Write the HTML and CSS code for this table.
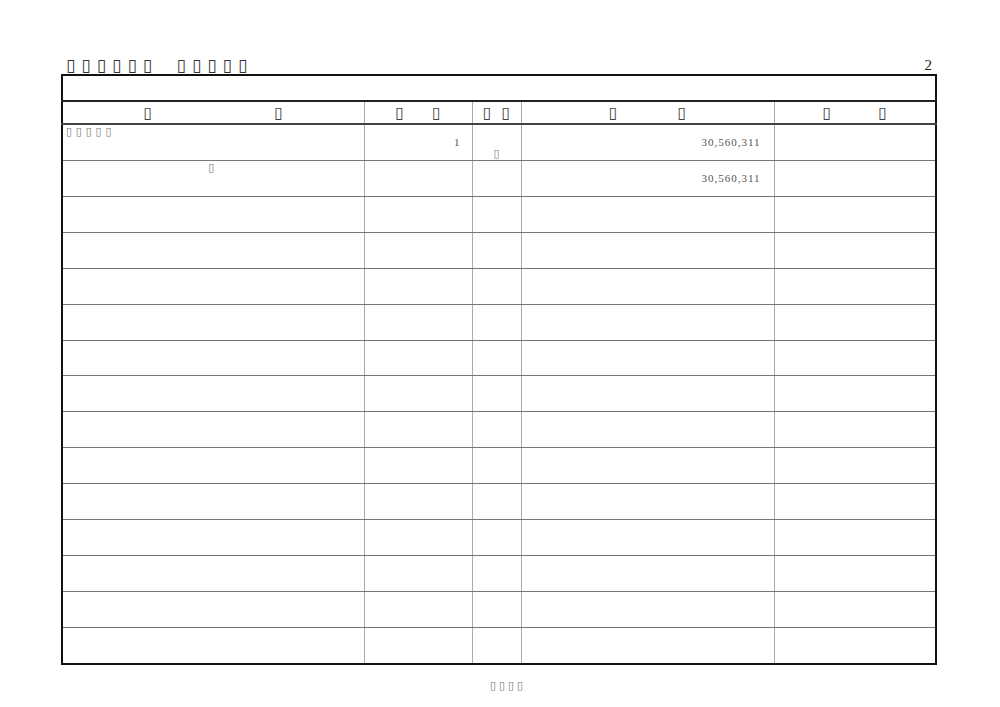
FILE: index.html
```html
<!DOCTYPE html>
<html lang="ja">
<head>
<meta charset="utf-8">
<link rel="stylesheet" href="styles.css">
</head>
<body>
<div class="page">
  <div class="title-row">
    <h1 class="title">▯▯▯▯▯▯ ▯▯▯▯▯</h1>
    <span class="pageno">2</span>
  </div>
  <table class="sheet">
    <colgroup>
      <col class="c-name"><col class="c-qty"><col class="c-unit"><col class="c-amt"><col class="c-rem">
    </colgroup>
    <tr class="blank"><td colspan="5"></td></tr>
    <tr class="head">
      <th><span class="hd hd-name"><span>▯</span><span>▯</span></span></th>
      <th><span class="hd hd-qty"><span>▯</span><span>▯</span></span></th>
      <th><span class="hd hd-unit"><span>▯</span><span>▯</span></span></th>
      <th><span class="hd hd-amt"><span>▯</span><span>▯</span></span></th>
      <th><span class="hd hd-rem"><span>▯</span><span>▯</span></span></th>
    </tr>
    <tr class="row">
      <td class="name">▯▯▯▯▯</td>
      <td class="qty">1</td>
      <td class="unit">▯</td>
      <td class="amt">30,560,311</td>
      <td></td>
    </tr>
    <tr class="row">
      <td class="name total">▯</td>
      <td class="qty"></td>
      <td class="unit"></td>
      <td class="amt">30,560,311</td>
      <td></td>
    </tr>
    <tr class="row"><td></td><td></td><td></td><td></td><td></td></tr>
    <tr class="row"><td></td><td></td><td></td><td></td><td></td></tr>
    <tr class="row"><td></td><td></td><td></td><td></td><td></td></tr>
    <tr class="row"><td></td><td></td><td></td><td></td><td></td></tr>
    <tr class="row"><td></td><td></td><td></td><td></td><td></td></tr>
    <tr class="row"><td></td><td></td><td></td><td></td><td></td></tr>
    <tr class="row"><td></td><td></td><td></td><td></td><td></td></tr>
    <tr class="row"><td></td><td></td><td></td><td></td><td></td></tr>
    <tr class="row"><td></td><td></td><td></td><td></td><td></td></tr>
    <tr class="row"><td></td><td></td><td></td><td></td><td></td></tr>
    <tr class="row"><td></td><td></td><td></td><td></td><td></td></tr>
    <tr class="row"><td></td><td></td><td></td><td></td><td></td></tr>
    <tr class="row"><td></td><td></td><td></td><td></td><td></td></tr>
  </table>
  <div class="footer">▯▯▯▯</div>
</div>
</body>
</html>
```
FILE: styles.css
```css
html, body {
  margin: 0;
  padding: 0;
  background: #fff;
}
body {
  font-family: "Liberation Serif", "DejaVu Serif", serif;
  color: #333;
}
.page {
  width: 874px;
  margin-left: 61px;
  padding-top: 56px;
}
.title-row {
  display: flex;
  justify-content: space-between;
  align-items: flex-end;
  height: 18px;
}
.title {
  margin: 0 0 0 5px;
  font-family: "DejaVu Sans", sans-serif;
  font-weight: normal;
  font-size: 17px;
  letter-spacing: 6px;
  word-spacing: 7px;
  line-height: 18px;
  color: #333;
  white-space: pre;
}
.pageno {
  font-family: "Liberation Serif", serif;
  font-size: 15px;
  line-height: 18px;
  margin-right: 3px;
  color: #222;
}
.sheet {
  width: 874px;
  border-collapse: collapse;
  table-layout: fixed;
  border: 2px solid #111;
}
.c-name { width: 302px; }
.c-qty { width: 108px; }
.c-unit { width: 49px; }
.c-amt { width: 253px; }
.c-rem { width: 162px; }
.sheet td, .sheet th {
  padding: 0;
  line-height: 12px;
  border-left: 1px solid #aaa;
  border-right: 1px solid #aaa;
  border-bottom: 1px solid #777;
}
.blank td {
  height: 24px;
  border-bottom: 2px solid #222;
}
.head th {
  height: 21px;
  font-weight: normal;
  border-bottom: 2px solid #444;
}
.hd {
  display: flex;
  justify-content: center;
  font-family: "DejaVu Sans", sans-serif;
  font-size: 16px;
  line-height: 18px;
  color: #444;
}
.hd-name { gap: 122px; }
.hd-qty { gap: 28px; }
.hd-unit { gap: 10px; }
.hd-amt { gap: 60px; }
.hd-rem { gap: 47px; }
.row td {
  height: 34.93px;
  font-size: 11px;
  color: #555;
}
.name {
  vertical-align: top;
  font-family: "DejaVu Sans", sans-serif;
  letter-spacing: 3.8px;
  line-height: 14px !important;
  padding-left: 3px !important;
  color: #777 !important;
}
.name.total {
  text-align: center;
  padding-left: 0 !important;
}
.qty {
  text-align: right;
  vertical-align: middle;
  padding-right: 12px !important;
}
.unit {
  text-align: center;
  vertical-align: bottom;
  font-family: "DejaVu Sans", sans-serif;
  line-height: 13px !important;
  color: #777 !important;
}
.amt {
  text-align: right;
  vertical-align: middle;
  letter-spacing: 1px;
  padding-right: 13px !important;
}
.footer {
  text-align: center;
  margin-top: 14px;
  padding-left: 20px;
  font-family: "DejaVu Sans", sans-serif;
  font-size: 11px;
  line-height: 14px;
  letter-spacing: 3px;
  color: #777;
}
```
